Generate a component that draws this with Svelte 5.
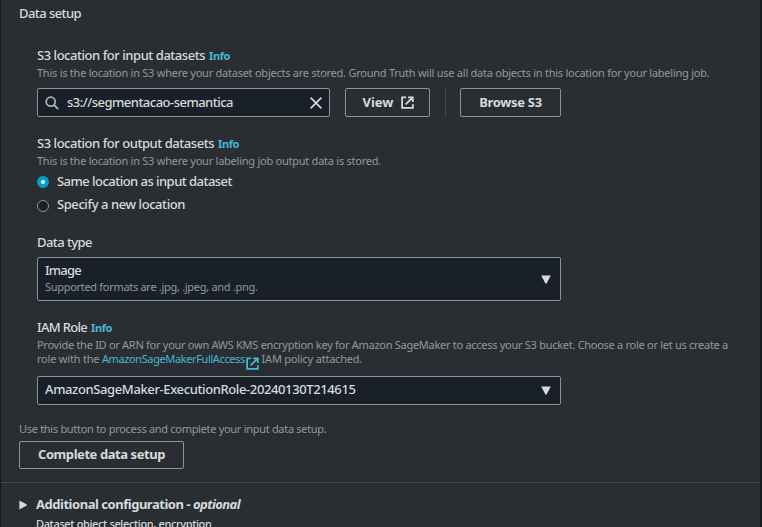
<script>
  let location = $state('same');
  const outputs = [
    { id: 'same', text: 'Same location as input dataset' },
    { id: 'new', text: 'Specify a new location' }
  ];
</script>

{#snippet external()}
  <svg class="ext" viewBox="0 0 14 14" width="13" height="13" fill="none" stroke="currentColor" stroke-width="1.9">
    <path d="M5.5 1.4H1.2V12.9H12.8V8.8M7.6 1.4H12.7V6.4M12.4 1.7L5 9" />
  </svg>
{/snippet}

<main>
  <h2>Data setup</h2>
  <div class="fields">
    <section class="input">
      <h3><span class="l1">S3 location for input datasets</span><a class="info">Info</a></h3>
      <p class="d1">This is the location in S3 where your dataset objects are stored. Ground Truth will use all data objects in this location for your labeling job.</p>
      <div class="row">
        <div class="box search">
          <svg width="14" height="14" viewBox="0 0 14 14" fill="none" stroke="#a7b3b4" stroke-width="1.8"><circle cx="5.7" cy="5.7" r="4.5" /><path d="M9 9L13.2 13.2" /></svg>
          <span class="uri">s3://segmentacao-semantica</span>
          <svg width="12" height="12" viewBox="0 0 12 12" fill="none" stroke="#d5dbdb" stroke-width="1.7"><path d="M.6 .6L11.4 11.4M11.4 .6L.6 11.4" /></svg>
        </div>
        <button class="view"><span>View</span>{@render external()}</button>
        <i class="sep"></i>
        <button class="browse"><span>Browse S3</span></button>
      </div>
    </section>

    <section class="output">
      <h3><span class="l2">S3 location for output datasets</span><a class="info">Info</a></h3>
      <p class="d2">This is the location in S3 where your labeling job output data is stored.</p>
      {#each outputs as o}
        <div class="radio {o.id}" role="radio" tabindex="0" aria-checked={location === o.id} onclick={() => (location = o.id)} onkeydown={() => (location = o.id)}>
          <i class:on={location === o.id}></i><span>{o.text}</span>
        </div>
      {/each}
    </section>

    <section class="type">
      <h3><span class="l3">Data type</span></h3>
      <div class="box select tall">
        <div><b>Image</b><p class="d3">Supported formats are .jpg, .jpeg, and .png.</p></div>
        <svg width="10" height="9" viewBox="0 0 10 9"><path d="M.2 .5H9.8L5.6 8.5H4.4Z" fill="#d5dbdb" /></svg>
      </div>
    </section>

    <section class="role">
      <h3><span class="l4">IAM Role</span><a class="info">Info</a></h3>
      <p class="d4">Provide the ID or ARN for your own AWS KMS encryption key for Amazon SageMaker to access your S3 bucket. Choose a role or let us create a</p>
      <p class="d5"><span>{'role with the '}</span><a>AmazonSageMakerFullAccess{@render external()}</a><span>{' IAM policy attached.'}</span></p>
      <div class="box select">
        <span class="arn">AmazonSageMaker-ExecutionRole-20240130T214615</span>
        <svg width="10" height="9" viewBox="0 0 10 9"><path d="M.2 .5H9.8L5.6 8.5H4.4Z" fill="#d5dbdb" /></svg>
      </div>
    </section>
  </div>

  <div class="complete">
    <p class="d6">Use this button to process and complete your input data setup.</p>
    <button class="done"><span>Complete data setup</span></button>
  </div>

  <footer>
    <svg width="8" height="10" viewBox="0 0 8 10"><path d="M.4 .4V9.6L7.8 5.4V4.6Z" fill="#d5dbdb" /></svg>
    <div>
      <h4><span>{'Additional configuration - '}</span><em>optional</em></h4>
      <p class="d7">Dataset object selection, encryption</p>
    </div>
  </footer>
</main>

<style>
  :global(body) { background: #16191f; overflow: hidden; }
  main {
    box-sizing: border-box; height: 527px; margin: 0 2px 0 1px; padding-top: 3px; overflow: hidden;
    background: #2a2e33; color: #d5dbdb; white-space: nowrap;
    font: 500 13px/20px "Noto Sans", "Open Sans", sans-serif;
  }
  h2, h3, h4, p { margin: 0; font-weight: 500; font-size: 13px; }
  h2 { height: 21px; padding-left: 18px; letter-spacing: -0.57px; }
  h3 { height: 18px; line-height: 17px; display: flex; }
  .l1, .l2 { letter-spacing: -0.46px; }
  .l3 { letter-spacing: -0.57px; }
  .l4 { letter-spacing: -0.69px; }
  .info { margin-left: 4px; font-size: 11px; line-height: 18px; font-weight: 700; letter-spacing: -0.39px; }
  a { color: #44b9d6; }
  p { color: #8d9b9c; font-size: 11px; font-weight: 400; height: 14px; line-height: 14px; }
  .d1, .d2 { letter-spacing: -0.247px; }
  .d3, .d6 { letter-spacing: -0.3px; }
  .d4 { letter-spacing: -0.281px; margin-top: 1px; }
  .d5 { letter-spacing: -0.21px; }
  .d5 a { letter-spacing: -0.383px; }
  .d5 span { white-space: pre; }
  .fields { padding: 23px 0 0 36px; }
  section.input { height: 88px; }
  section.output { height: 99px; }
  section.type { height: 85px; }
  section.role { height: 102px; }
  .input p, .output p { height: 17px; line-height: 15px; }
  .row { display: flex; margin-top: 6px; }
  .box, button { box-sizing: border-box; border: 1px solid #879596; border-radius: 2px; display: flex; align-items: center; }
  .box { background: #1a2029; color: #d5dbdb; }
  .search { width: 293px; height: 29px; padding: 0 7px; }
  .uri { margin: -2px 0 0 8px; flex: 1; letter-spacing: -0.516px; }
  button { height: 29px; padding: 0; justify-content: center; background: none; color: #d5dbdb; font: 700 13px/20px "Noto Sans", sans-serif; }
  button span { margin-top: -2px; }
  .view { width: 85px; margin-left: 15px; padding-left: 2px; gap: 8px; }
  .sep { width: 1px; height: 29px; margin: 0 14px 0 15px; background: #414750; }
  .browse { width: 101px; letter-spacing: -0.33px; }
  .radio { display: flex; align-items: center; height: 23px; }
  .radio.same { margin-top: 1px; }
  .radio i { box-sizing: border-box; width: 12px; height: 12px; margin-top: 1px; border: 1px solid #879596; border-radius: 50%; background: #1a2029; }
  .radio i.on { border: 4px solid #00a1c9; background: #fff; margin-top: -1px; }
  .radio span { margin: -3px 0 0 8px; }
  .same span { letter-spacing: -0.534px; }
  .new span { letter-spacing: -0.425px; }
  .select { width: 524px; height: 29px; padding: 0 9px 0 7px; justify-content: space-between; }
  .tall { height: 44px; margin-top: 5px; }
  .tall b { display: block; font-weight: 500; height: 17px; line-height: 18px; margin-top: -2px; letter-spacing: -0.8px; }
  .tall p { height: 17px; line-height: 18px; }
  .role .select { margin-top: 10px; }
  .arn { margin-top: -3px; letter-spacing: -0.384px; }
  .role .ext { vertical-align: -7px; margin-left: 1px; }
  .complete { height: 61px; padding: 0 0 0 18px; }
  .complete p { height: 20px; line-height: 16px; }
  .done { width: 165px; height: 28px; letter-spacing: -0.431px; }
  footer { border-top: 1px solid #414b57; display: flex; padding: 12px 0 0 18px; }
  footer svg { margin-top: 5px; }
  footer div { margin-left: 9px; }
  h4 { font-weight: 700; height: 21px; line-height: 19px; letter-spacing: -0.47px; }
  h4 span { white-space: pre; }
  h4 em { letter-spacing: -0.576px; }
  .d7 { height: 16px; line-height: 16px; color: #d5dbdb; font-weight: 500; letter-spacing: -0.363px; }
</style>
